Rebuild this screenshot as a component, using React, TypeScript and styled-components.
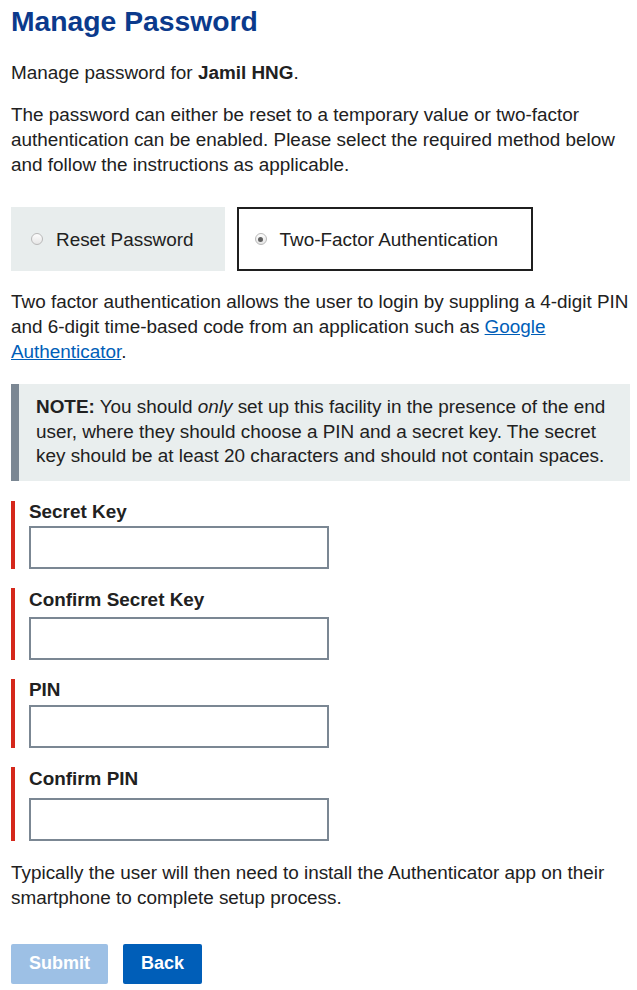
import React from "react";
import styled, { createGlobalStyle } from "styled-components";

const Global = createGlobalStyle`
  html, body { margin: 0; padding: 0; background: #fff; }
  body { font-family: "Liberation Sans", Arial, Helvetica, sans-serif; color: #212121; }
  * { box-sizing: border-box; }
`;

const Page = styled.main`
  padding: 0 7px 0 11px;
  font-size: 18.9px;
  line-height: 25px;
`;

const Title = styled.h1`
  margin: 0;
  padding-top: 2px;
  font-size: 28.3px;
  line-height: 38px;
  font-weight: 700;
  color: #0b3a8c;
`;

const Para = styled.p<{ $mt?: number }>`
  margin: ${(p) => p.$mt ?? 20}px 0 0;
`;

const Choices = styled.div`
  display: flex;
  gap: 12px;
  margin-top: 30px;
`;

const Choice = styled.label<{ $selected?: boolean }>`
  display: flex;
  align-items: center;
  gap: 13px;
  height: 64px;
  padding: 0 ${(p) => (p.$selected ? 33 : 29)}px 0 ${(p) => (p.$selected ? 16 : 18)}px;
  background: ${(p) => (p.$selected ? "#fff" : "#e8eded")};
  border: ${(p) => (p.$selected ? "2px solid #1f1f1f" : "2px solid #e8eded")};
  cursor: pointer;
`;

const RadioDot = styled.span<{ $on?: boolean }>`
  width: 12px;
  height: 12px;
  border-radius: 50%;
  border: 1px solid #b9b9b9;
  background: linear-gradient(#fdfdfd, #e6e6e6);
  display: flex;
  align-items: center;
  justify-content: center;
  &::after {
    content: "";
    width: 5px;
    height: 5px;
    border-radius: 50%;
    background: ${(p) => (p.$on ? "#5f5f5f" : "transparent")};
  }
`;

const Link = styled.a`
  color: #005eb8;
  text-decoration: underline;
`;

const Note = styled.div`
  margin-top: 20px;
  background: #e9eeee;
  border-left: 8px solid #7b8793;
  padding: 11px 18px 12px 17px;
  line-height: 24.5px;
`;

const Fields = styled.div`
  display: flex;
  flex-direction: column;
  gap: 19px;
  margin-top: 20px;
`;

const Field = styled.div<{ $pt: number; $gap: number }>`
  border-left: 4px solid #d5281b;
  padding: ${(p) => p.$pt}px 0 0 14px;
  display: flex;
  flex-direction: column;
  gap: ${(p) => p.$gap}px;
`;

const Label = styled.label`
  font-weight: 700;
  line-height: 22px;
`;

const Input = styled.input`
  display: block;
  width: 300px;
  height: 43px;
  margin: 0;
  border: 2px solid #7b8793;
  font: inherit;
  padding: 0 8px;
  background: #fff;
`;

const Buttons = styled.div`
  display: flex;
  gap: 15px;
  margin-top: 34px;
`;

const Button = styled.button<{ $disabled?: boolean }>`
  height: 40px;
  padding: 0 18px;
  border: none;
  border-radius: 2px;
  font-family: inherit;
  font-weight: 700;
  font-size: 18px;
  color: #fff;
  background: ${(p) => (p.$disabled ? "#9dc0e5" : "#005eb8")};
  cursor: ${(p) => (p.$disabled ? "default" : "pointer")};
`;

const fields = [
  { label: "Secret Key", pt: 0, gap: 3 },
  { label: "Confirm Secret Key", pt: 1, gap: 6 },
  { label: "PIN", pt: 0, gap: 4 },
  { label: "Confirm PIN", pt: 1, gap: 8 },
];

export default function App() {
  return (
    <>
      <Global />
      <Page>
        <Title>Manage Password</Title>
        <Para $mt={20}>
          Manage password for <strong>Jamil HNG</strong>.
        </Para>
        <Para $mt={17}>
          The password can either be reset to a temporary value or two-factor
          authentication can be enabled. Please select the required method below
          and follow the instructions as applicable.
        </Para>
        <Choices>
          <Choice>
            <RadioDot />
            Reset Password
          </Choice>
          <Choice $selected>
            <RadioDot $on />
            Two-Factor Authentication
          </Choice>
        </Choices>
        <Para $mt={18}>
          Two factor authentication allows the user to login by suppling a 4-digit PIN
          and 6-digit time-based code from an application such as{" "}
          <Link href="#">Google Authenticator</Link>.
        </Para>
        <Note>
          <strong>NOTE:</strong> You should <em>only</em> set up this facility in the
          presence of the end user, where they should choose a PIN and a secret key.
          The secret key should be at least 20 characters and should not contain
          spaces.
        </Note>
        <Fields>
          {fields.map((f) => (
            <Field key={f.label} $pt={f.pt} $gap={f.gap}>
              <Label>{f.label}</Label>
              <Input type="text" />
            </Field>
          ))}
        </Fields>
        <Para $mt={19}>
          Typically the user will then need to install the Authenticator app on their
          smartphone to complete setup process.
        </Para>
        <Buttons>
          <Button $disabled disabled>Submit</Button>
          <Button>Back</Button>
        </Buttons>
      </Page>
    </>
  );
}
